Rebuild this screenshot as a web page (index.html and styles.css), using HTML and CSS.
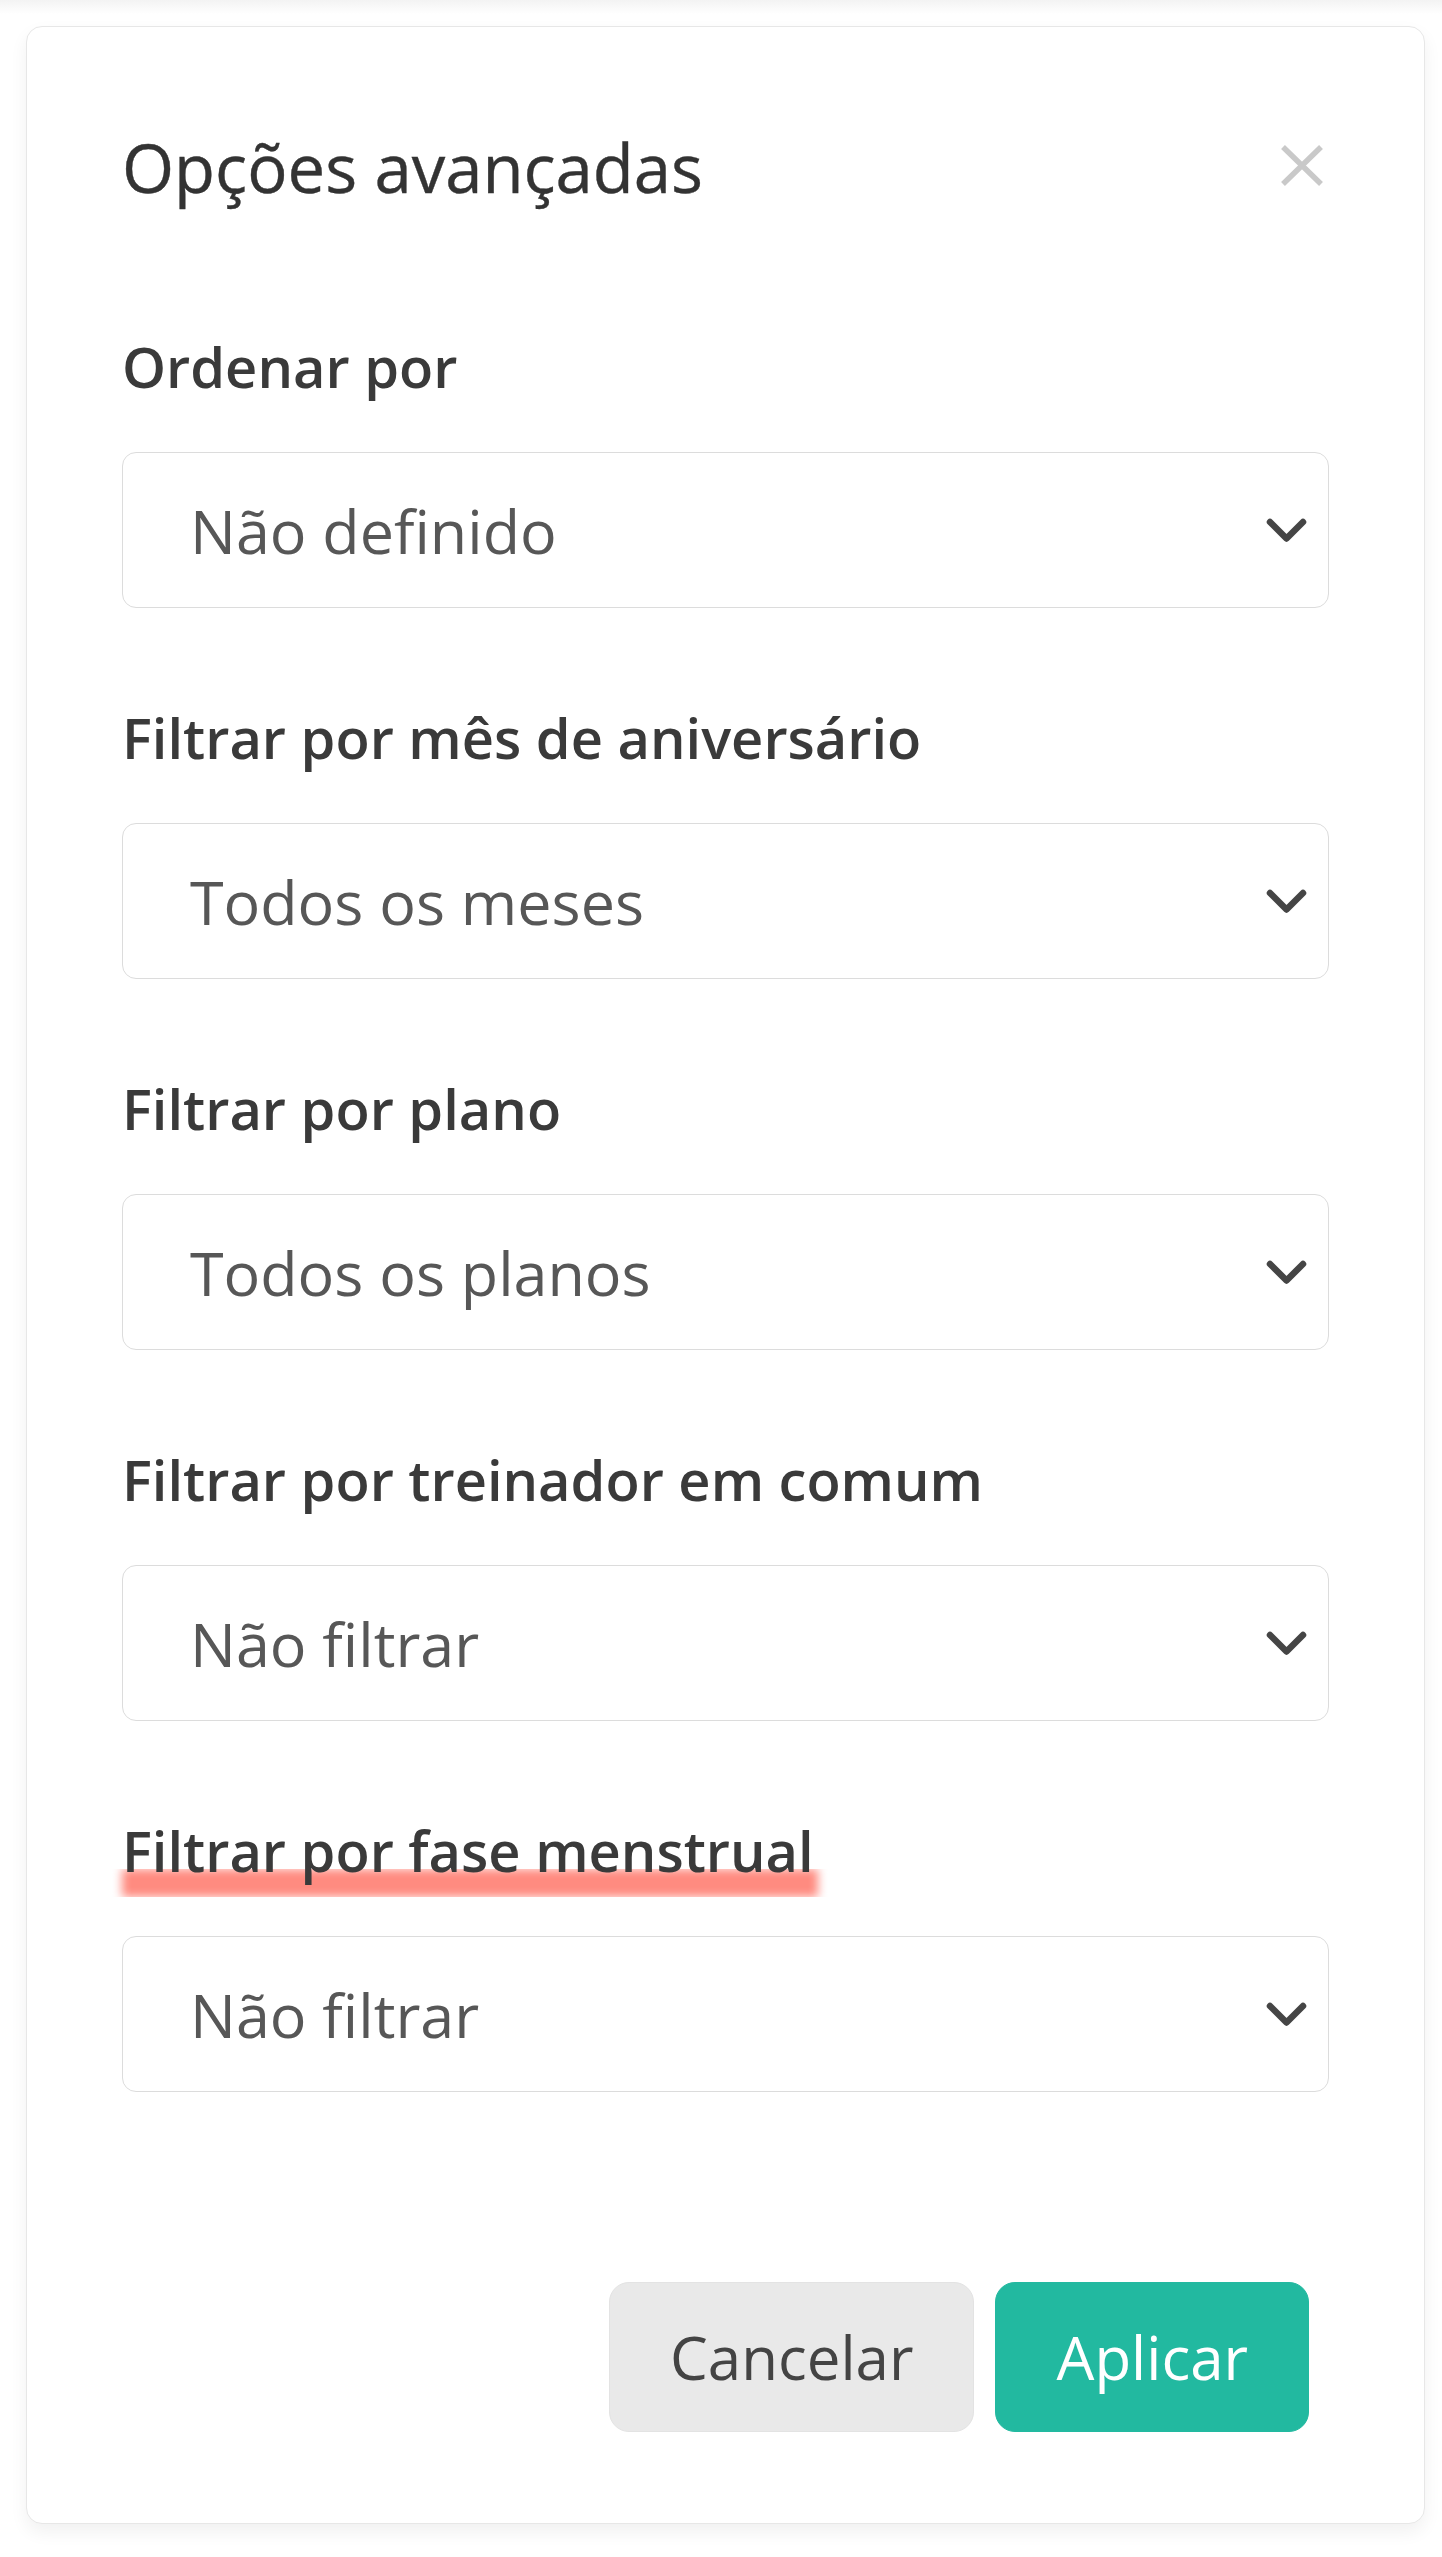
FILE: index.html
```html
<!DOCTYPE html>
<html lang="pt-BR">
<head>
<meta charset="utf-8">
<title>Opções avançadas</title>
<link rel="stylesheet" href="styles.css">
</head>
<body>
<div class="card">
  <div class="header">
    <h1 class="title">Opções avançadas</h1>
    <svg class="close" width="42" height="41" viewBox="0 0 42 41" aria-label="Fechar">
      <path d="M2 2 L40 39 M40 2 L2 39" stroke="#c9c9c9" stroke-width="5.5" fill="none"/>
    </svg>
  </div>

  <div class="fields">
    <div class="group">
      <div class="label">Ordenar por</div>
      <div class="select"><span>Não definido</span>
        <svg class="chev" width="41" height="25" viewBox="0 0 41 25"><path d="M4 4 L20.5 20.5 L37 4" stroke="#454545" stroke-width="6.5" fill="none" stroke-linecap="round" stroke-linejoin="round"/></svg>
      </div>
    </div>
    <div class="group">
      <div class="label">Filtrar por mês de aniversário</div>
      <div class="select"><span>Todos os meses</span>
        <svg class="chev" width="41" height="25" viewBox="0 0 41 25"><path d="M4 4 L20.5 20.5 L37 4" stroke="#454545" stroke-width="6.5" fill="none" stroke-linecap="round" stroke-linejoin="round"/></svg>
      </div>
    </div>
    <div class="group">
      <div class="label">Filtrar por plano</div>
      <div class="select"><span>Todos os planos</span>
        <svg class="chev" width="41" height="25" viewBox="0 0 41 25"><path d="M4 4 L20.5 20.5 L37 4" stroke="#454545" stroke-width="6.5" fill="none" stroke-linecap="round" stroke-linejoin="round"/></svg>
      </div>
    </div>
    <div class="group">
      <div class="label">Filtrar por treinador em comum</div>
      <div class="select"><span>Não filtrar</span>
        <svg class="chev" width="41" height="25" viewBox="0 0 41 25"><path d="M4 4 L20.5 20.5 L37 4" stroke="#454545" stroke-width="6.5" fill="none" stroke-linecap="round" stroke-linejoin="round"/></svg>
      </div>
    </div>
    <div class="group">
      <div class="label marked">Filtrar por fase menstrual<span class="mark"><span class="mark-ink"></span></span></div>
      <div class="select"><span>Não filtrar</span>
        <svg class="chev" width="41" height="25" viewBox="0 0 41 25"><path d="M4 4 L20.5 20.5 L37 4" stroke="#454545" stroke-width="6.5" fill="none" stroke-linecap="round" stroke-linejoin="round"/></svg>
      </div>
    </div>
  </div>

  <div class="actions">
    <button class="btn btn-cancel">Cancelar</button>
    <button class="btn btn-apply">Aplicar</button>
  </div>
</div>
</body>
</html>
```

FILE: styles.css
```css
html, body {
  margin: 0;
  padding: 0;
}
body {
  font-family: "Open Sans", "Noto Sans", sans-serif;
  background: linear-gradient(#f3f3f3, #ffffff 14px) no-repeat, #ffffff;
  padding-top: 26px;
  padding-bottom: 32px;
}
.card {
  margin: 0 17px 0 26px;
  border: 1px solid #e7e7e7;
  border-radius: 16px;
  background: #fff;
  box-shadow: 0 8px 18px rgba(0, 0, 0, 0.06);
  padding: 101px 95px 91px 95px;
}
.header {
  display: flex;
  justify-content: space-between;
  align-items: center;
}
.title {
  margin: 0;
  font-size: 67px;
  line-height: 79px;
  font-weight: 400;
  color: #333;
  -webkit-text-stroke: 0.4px #333;
}
.close {
  display: block;
  margin-right: 6px;
  margin-top: -4px;
}
.fields {
  margin-top: 117px;
  display: flex;
  flex-direction: column;
  gap: 87px;
}
.label {
  font-size: 56px;
  line-height: 84px;
  font-weight: 600;
  color: #3a3a3a;
  margin-bottom: 44px;
}
.marked {
  position: relative;
  z-index: 0;
  display: inline-block;
  margin-bottom: 0;
}
.group .marked + .select {
  margin-top: 44px;
}
.mark {
  position: absolute;
  left: -18px;
  width: 742px;
  top: 61px;
  height: 28px;
  overflow: hidden;
  z-index: -1;
}
.mark-ink {
  position: absolute;
  left: 18px;
  right: 28px;
  top: 0;
  bottom: 0;
  background: #ff8b80;
  filter: blur(5px);
}
.select {
  box-sizing: border-box;
  height: 156px;
  border: 1px solid #dcdcdc;
  border-radius: 14px;
  display: flex;
  align-items: center;
  justify-content: space-between;
  padding: 0 21px 0 67px;
  font-size: 61px;
  color: #575757;
  background: #fff;
}
.chev {
  display: block;
}
.actions {
  margin-top: 190px;
  display: flex;
  justify-content: flex-end;
  gap: 21px;
  padding-right: 20px;
}
.btn {
  font-family: "Open Sans", "Noto Sans", sans-serif;
  height: 150px;
  padding: 0 60px;
  border-radius: 20px;
  font-size: 60px;
  font-weight: 400;
  cursor: pointer;
}
.btn-cancel {
  background: #e9e9e9;
  border: 1px solid #e3e3e3;
  color: #444;
}
.btn-apply {
  background: #22b9a0;
  border: 1px solid #22b9a0;
  color: #fff;
}
```
